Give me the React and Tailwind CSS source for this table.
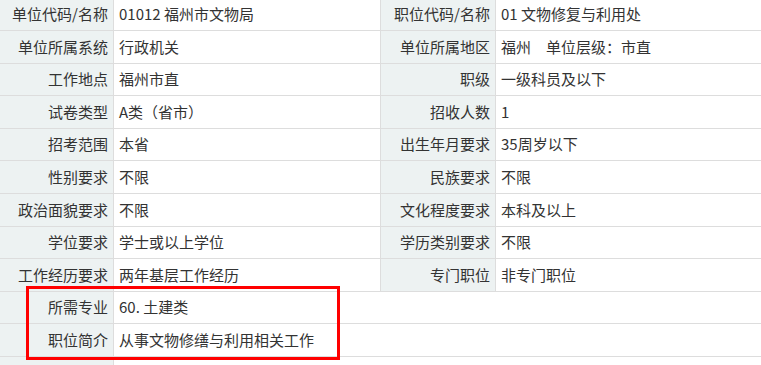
const rows = [
  ['单位代码/名称', '01012 福州市文物局', '职位代码/名称', '01 文物修复与利用处'],
  ['单位所属系统', '行政机关', '单位所属地区', '福州\u3000单位层级：市直'],
  ['工作地点', '福州市直', '职级', '一级科员及以下'],
  ['试卷类型', 'A类（省市）', '招收人数', '1'],
  ['招考范围', '本省', '出生年月要求', '35周岁以下'],
  ['性别要求', '不限', '民族要求', '不限'],
  ['政治面貌要求', '不限', '文化程度要求', '本科及以上'],
  ['学位要求', '学士或以上学位', '学历类别要求', '不限'],
  ['工作经历要求', '两年基层工作经历', '专门职位', '非专门职位'],
];

const wide = [
  ['所需专业', '60. 土建类'],
  ['职位简介', '从事文物修缮与利用相关工作'],
  ['', ''],
];

const label = 'flex items-center justify-end pr-[5px] bg-[#edf2f2] border-r border-[#dddddd] whitespace-pre';
const value = 'flex items-center pl-[5px] whitespace-pre';

export default function App() {
  return (
    <div
      className="relative w-[761px] h-[365px] overflow-hidden bg-white text-[15px] text-[#333333]"
      style={{ fontFamily: '"Noto Sans CJK SC", "Liberation Sans", sans-serif' }}
    >
      <div className="mt-[-1.5px]">
        {rows.map((r, i) => (
          <div key={i} className="flex h-[32.6px] border-b border-[#dddddd]">
            <div className={`${label} w-[114px] shrink-0`}>{r[0]}</div>
            <div className={`${value} w-[267px] shrink-0 border-r border-[#dddddd]`}>{r[1]}</div>
            <div className={`${label} w-[115px] shrink-0`}>{r[2]}</div>
            <div className={`${value} flex-1`}>{r[3]}</div>
          </div>
        ))}
        {wide.map((r, i) => (
          <div key={i} className="flex h-[32.6px] border-b border-[#dddddd]">
            <div className={`${label} w-[114px] shrink-0`}>{r[0]}</div>
            <div className={`${value} flex-1`}>{r[1]}</div>
          </div>
        ))}
      </div>

      {/* highlight box */}
      <div className="absolute left-[26px] top-[286px] w-[314px] h-[74px] border-[3px] border-[#ff0000] pointer-events-none" />
    </div>
  );
}
